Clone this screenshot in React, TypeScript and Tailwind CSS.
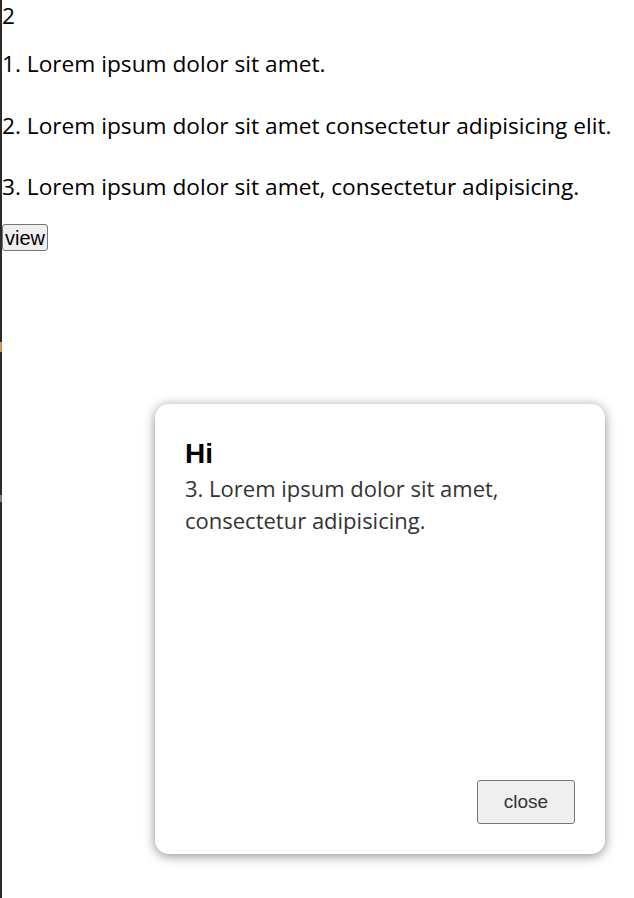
import { useState } from "react";

const items = [
  "1. Lorem ipsum dolor sit amet.",
  "2. Lorem ipsum dolor sit amet consectetur adipisicing elit.",
  "3. Lorem ipsum dolor sit amet, consectetur adipisicing.",
];

export default function App() {
  const [open, setOpen] = useState(true);

  return (
    <div className="relative min-h-[898px] border-l-2 border-[#2b2b2b] bg-white font-['Open_Sans',sans-serif] text-[22.7px] text-black">
      {/* little marks on the left edge */}
      <span className="absolute -left-[2px] top-[342px] h-[10px] w-[2px] bg-[#c9955c]" />
      <span className="absolute -left-[2px] top-[495px] h-[7px] w-[2px] bg-[#8a7a66]" />

      <div className="leading-[32px] h-[32px]">2</div>
      <div className="mt-[16px] flex flex-col gap-[29.5px]">
        {items.map((t) => (
          <p key={t} className="leading-[32px]">
            {t}
          </p>
        ))}
      </div>
      <button
        onClick={() => setOpen(true)}
        className="mt-[21px] h-[27px] px-[2px] rounded-[3px] border border-[#767676] bg-[#efefef] font-['Liberation_Sans',sans-serif] text-[20px] leading-[20px] text-black"
      >
        view
      </button>

      {open && (
        <div className="absolute left-[153px] top-[404px] w-[450px] h-[450px] rounded-[14px] bg-white p-[30px] shadow-[0_2px_12px_rgba(0,0,0,0.45)] flex flex-col">
          <h2 className="pt-[2px] font-['Liberation_Sans',sans-serif] font-bold text-[28px] leading-[36px] text-black">Hi</h2>
          <p className="text-[22px] leading-[32px] text-[#333]">
            3. Lorem ipsum dolor sit amet, consectetur adipisicing.
          </p>
          <div className="mt-auto flex justify-end">
            <button
              onClick={() => setOpen(false)}
              className="w-[98px] h-[44px] rounded-[3px] border border-[#767676] bg-[#efefef] font-['Liberation_Sans',sans-serif] text-[19px] text-[#333]"
            >
              close
            </button>
          </div>
        </div>
      )}
    </div>
  );
}
